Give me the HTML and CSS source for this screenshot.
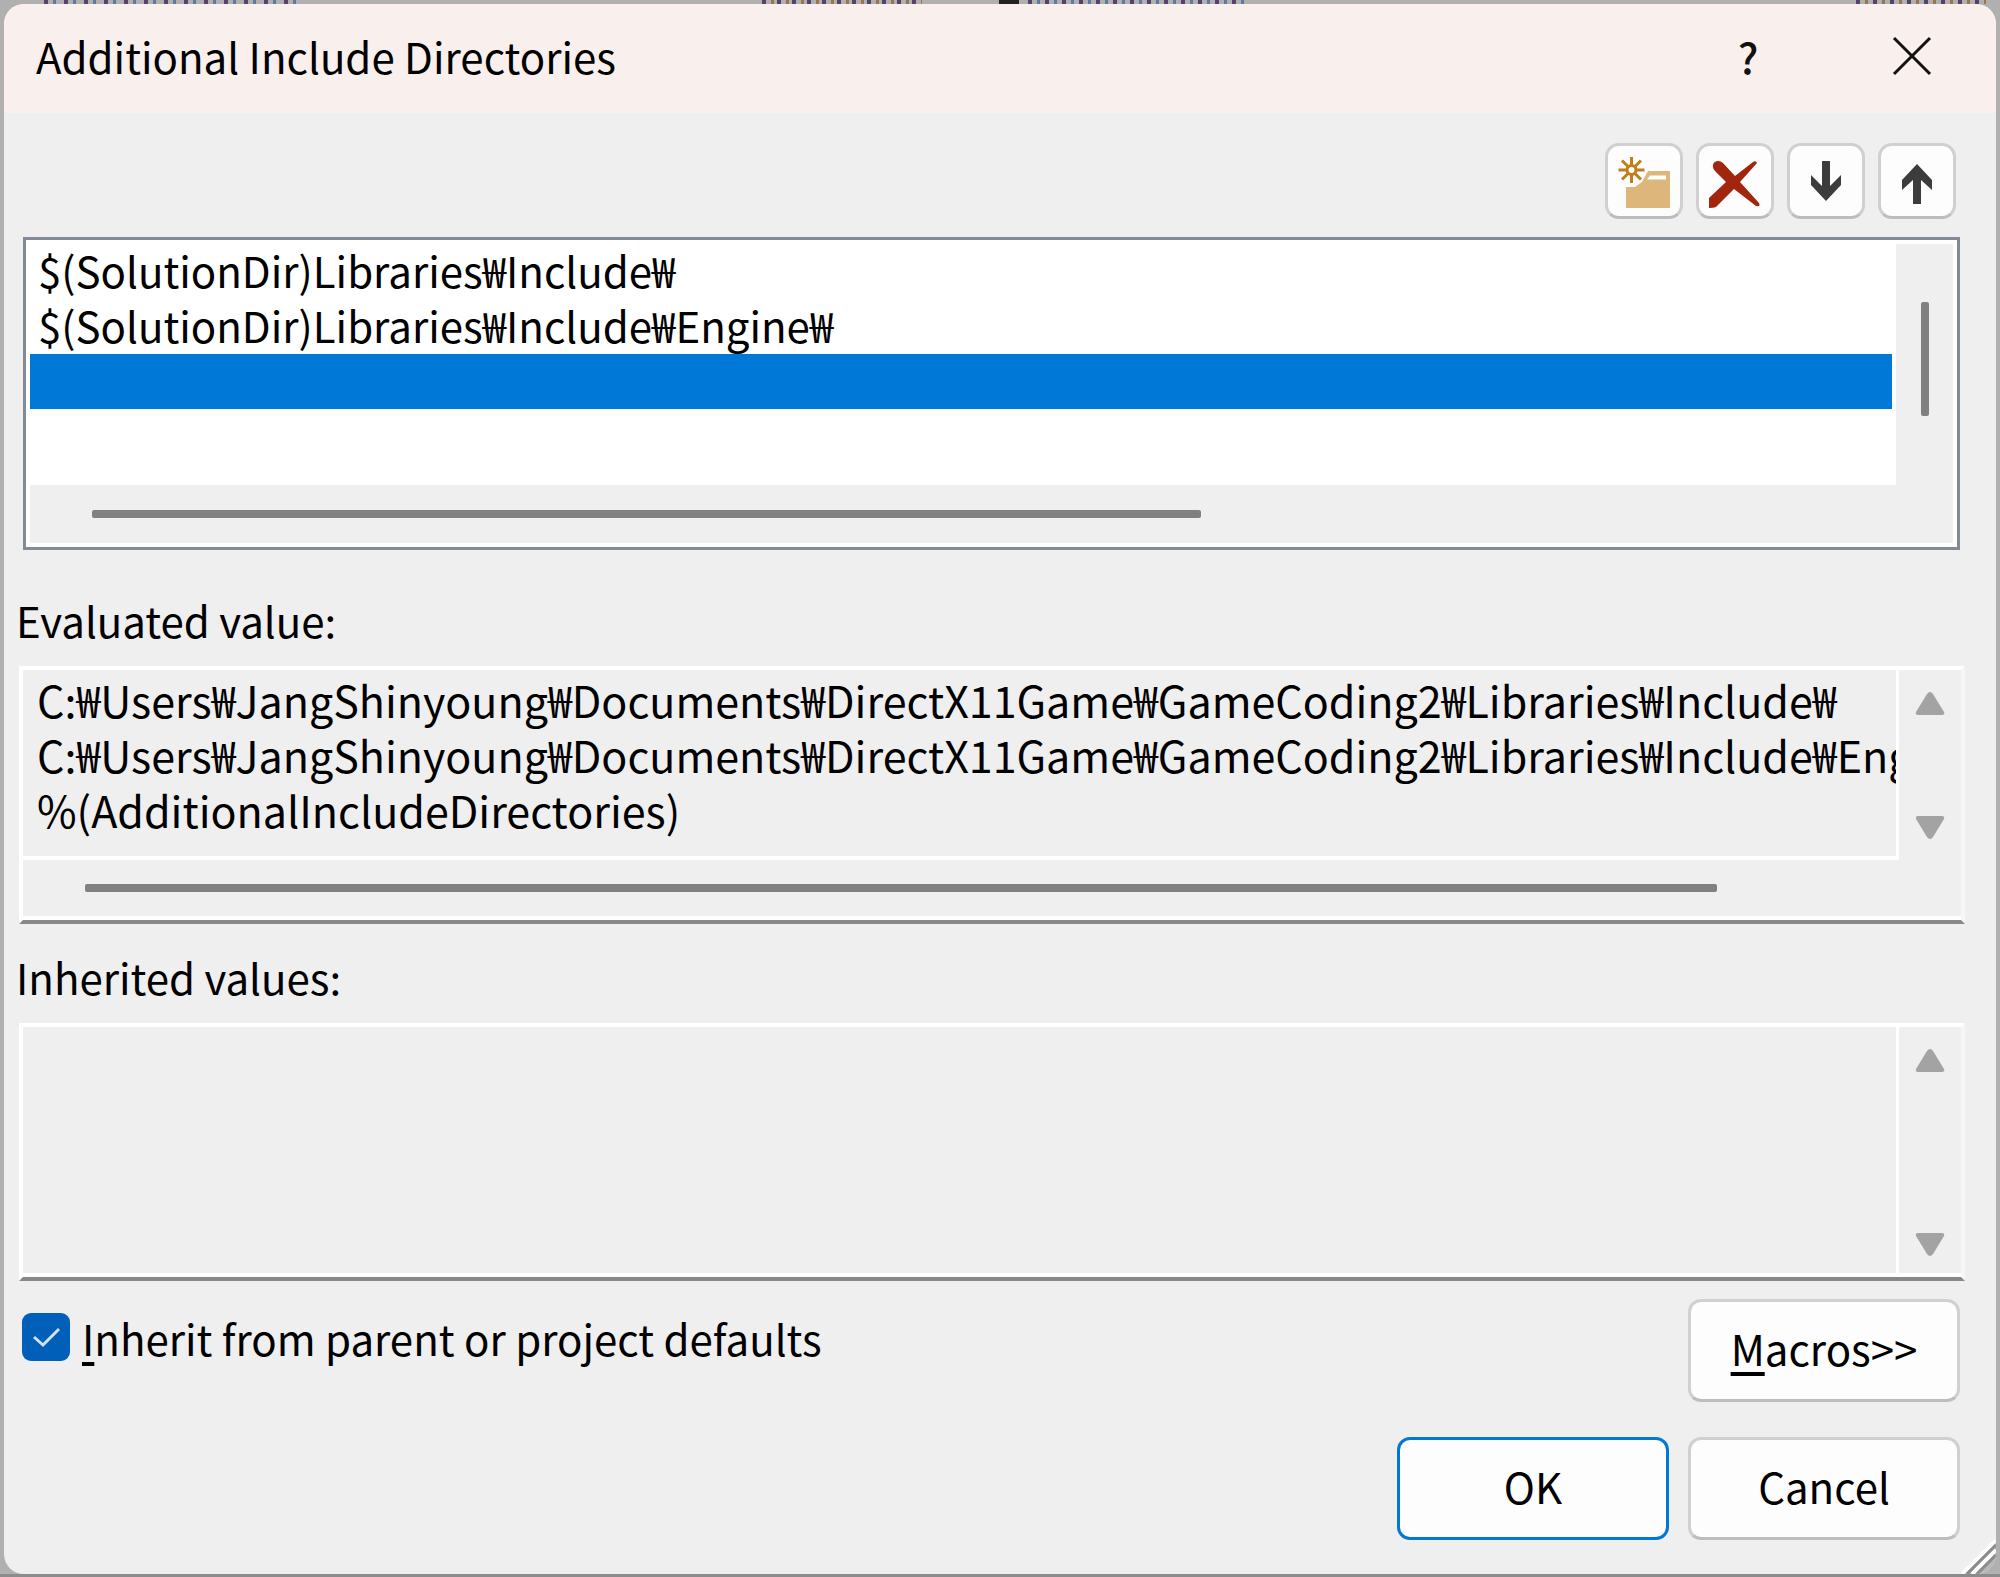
FILE: index.html
```html
<!DOCTYPE html>
<html lang="en">
	<head>
		<title>Additional Include Directories</title>
		<meta charset="utf-8" />
		<meta name="viewport" content="width=device-width, initial-scale=1" />
		<link rel="stylesheet" href="styles.css">
	</head>
	<body>
		<main class="dialog">
			<header class="titlebar">
				<h1>Additional Include Directories</h1>
				<button class="caption-btn help" type="button" aria-label="Help">?</button>
				<button class="caption-btn" type="button" aria-label="Close">
					<svg width="40" height="40" viewBox="0 0 40 40"><path d="M2 2L38 38M38 2L2 38" fill="none" stroke="#111" stroke-width="3"/></svg>
				</button>
			</header>

			<form class="content">
				<div class="toolbar">
					<button class="btn tool" type="button" aria-label="New line">
						<svg width="54" height="54" viewBox="0 0 54 54">
							<path d="M9 33H18L25 28L31 17H53V54H9Z" fill="#dcb67a"/>
							<path d="M33 21.500H49V25.500H30Z" fill="#fff"/>
							<g stroke="#c27d1a" stroke-width="3" fill="none">
								<circle cx="14.500" cy="16" r="4.500"/>
								<path d="M14.500 3V11M14.500 21V29M1.500 16H9.500M19.500 16H27.500M5 6.500L11 12.500M18 19.500L24 25.500M24 6.500L18 12.500M11 19.500L5 25.500"/>
							</g>
						</svg>
					</button>
					<button class="btn tool" type="button" aria-label="Delete">
						<svg width="54" height="54" viewBox="0 0 54 54"><path d="M5 13C4 7 11 5 15 9L27 22L45 8Q48 6 49 9L32 28L51 49Q53 53 48 52L26 35L8 53Q6 54 1 54V44L18 28L7 17Q5 15 5 13Z" fill="#a1260d"/></svg>
					</button>
					<button class="btn tool" type="button" aria-label="Move down">
						<svg width="54" height="54" viewBox="0 0 54 54"><path d="M23 7H31V32L42 21V31L27 47L12 31V21L23 32Z" fill="#3c3c3c"/></svg>
					</button>
					<button class="btn tool" type="button" aria-label="Move up">
						<svg width="54" height="54" viewBox="0 0 54 54"><path d="M23 50H31V26L42 36V26L27 10L12 26V36L23 26Z" fill="#3c3c3c"/></svg>
					</button>
				</div>

				<div class="paths">
					<ul class="rows">
						<li>$(SolutionDir)Libraries₩Include₩</li>
						<li>$(SolutionDir)Libraries₩Include₩Engine₩</li>
						<li class="selected"></li>
					</ul>
					<div class="vbar"><span class="thumb"></span></div>
					<div class="hbar"><span class="thumb"></span></div>
				</div>

				<h2>Evaluated value:</h2>
				<div class="box">
					<pre class="value">C:₩Users₩JangShinyoung₩Documents₩DirectX11Game₩GameCoding2₩Libraries₩Include₩
C:₩Users₩JangShinyoung₩Documents₩DirectX11Game₩GameCoding2₩Libraries₩Include₩Engine₩
%(AdditionalIncludeDirectories)</pre>
					<div class="arrows">
						<svg width="30" height="24" viewBox="0 0 30 24"><path d="M12 2Q15 -2 18 2L29 20Q30 23 27 23H3Q0 23 1 20Z" fill="#a3a3a3"/></svg>
						<svg width="30" height="24" viewBox="0 0 30 24"><path d="M12 22Q15 26 18 22L29 4Q30 1 27 1H3Q0 1 1 4Z" fill="#a3a3a3"/></svg>
					</div>
					<div class="hbar"><span class="thumb"></span></div>
				</div>

				<h2>Inherited values:</h2>
				<div class="box empty">
					<pre class="value"></pre>
					<div class="arrows">
						<svg width="30" height="24" viewBox="0 0 30 24"><path d="M12 2Q15 -2 18 2L29 20Q30 23 27 23H3Q0 23 1 20Z" fill="#a3a3a3"/></svg>
						<svg width="30" height="24" viewBox="0 0 30 24"><path d="M12 22Q15 26 18 22L29 4Q30 1 27 1H3Q0 1 1 4Z" fill="#a3a3a3"/></svg>
					</div>
				</div>

				<div class="options">
					<label class="inherit" for="inherit">
						<input type="checkbox" id="inherit" checked>
						<span><u>I</u>nherit from parent or project defaults</span>
					</label>
					<button class="btn" type="button"><u>M</u>acros&gt;&gt;</button>
				</div>
				<div class="actions">
					<button class="btn default" type="submit">OK</button>
					<button class="btn" type="button">Cancel</button>
				</div>
			</form>
			<svg class="grip" width="34" height="34" viewBox="0 0 34 34">
				<path d="M0 34L34 0V34Z" fill="#b8b8b8"/>
				<path d="M0 34L34 0M10 34L34 10" stroke="#fff" stroke-width="4"/>
				<path d="M5 34L34 5M15 34L34 15" stroke="#8c8c8c" stroke-width="3"/>
			</svg>
		</main>
	</body>
</html>
```
FILE: styles.css
```css
* {
	box-sizing: border-box;
}
/* the strips along the top are the window behind showing past the edge */
body {
	margin: 0;
	min-height: 100vh;
	padding: 4px 4px 3px;
	display: flex;
	background:
		repeating-linear-gradient(90deg, #57406a 0 4px, #b0b0b0 4px 9px, #5c7c9c 9px 12px, #b0b0b0 12px 20px) 44px 0 / 258px 4px no-repeat,
		repeating-linear-gradient(90deg, #57406a 0 4px, #b0b0b0 4px 9px, #9c7550 9px 12px, #b0b0b0 12px 15px) 762px 0 / 160px 4px no-repeat,
		linear-gradient(#222, #222) 999px 0 / 20px 4px no-repeat,
		repeating-linear-gradient(90deg, #57406a 0 4px, #b0b0b0 4px 9px, #5c7c9c 9px 12px, #b0b0b0 12px 17px) 1028px 0 / 218px 4px no-repeat,
		repeating-linear-gradient(90deg, #57406a 0 4px, #b0b0b0 4px 9px, #9c7550 9px 12px, #b0b0b0 12px 17px) 1856px 0 / 130px 4px no-repeat,
		linear-gradient(#8c8c8c, #8c8c8c) 0 100% / 100% 3px no-repeat,
		#b0b0b0;
	color: #000;
	font-family: "Noto Sans CJK KR", "Noto Sans", sans-serif;
	font-size: 42px;
	line-height: 55px;
}
h1, h2 {
	margin: 0;
	font-size: inherit;
	font-weight: normal;
}
svg {
	display: block;
}
u {
	text-decoration-thickness: 4px;
	text-underline-offset: 6px;
}

.dialog {
	position: relative;
	flex: 1;
	border-radius: 20px;
	background: #efefef;
	overflow: hidden;
}

.titlebar {
	display: flex;
	align-items: center;
	height: 109px;
	padding: 0 20px 6px 32px;
	background: #f9f0ed;
}
.titlebar h1 {
	flex: 1;
}
.caption-btn {
	display: flex;
	align-items: center;
	justify-content: center;
	width: 128px;
	height: 100px;
	margin-left: 36px;
	padding: 0;
	border: 0;
	background: none;
	color: #111;
	font: inherit;
}
.help {
	font-weight: 500;
}

.content {
	padding: 30px 31px 32px 15px;
}
.toolbar {
	display: flex;
	justify-content: flex-end;
	gap: 13px;
	padding-right: 9px;
}

.btn {
	display: flex;
	align-items: center;
	justify-content: center;
	width: 272px;
	height: 103px;
	padding: 0 0 6px;
	border: 3px solid #d0d0d0;
	border-bottom-color: #bdbdbd;
	border-radius: 13px;
	background: #fdfdfd;
	color: #000;
	font: inherit;
}
.btn.tool {
	width: 78px;
	height: 76px;
	padding: 0;
	border-radius: 14px;
}
.btn.default {
	border-color: #0078d4;
}

/* editable list with its scrollbars */
.paths {
	display: grid;
	grid-template-columns: 1fr 57px;
	grid-template-rows: 241px 58px;
	margin: 18px 5px 17px 4px;
	padding: 4px;
	border: 3px solid #838995;
	background: #fff;
}
.rows {
	margin: 0;
	padding: 0 4px 0 0;
	list-style: none;
	line-height: 51px;
	white-space: nowrap;
}
.rows li {
	height: 55px;
	padding-left: 8px;
}
.rows .selected {
	background: #0078d7;
}
.vbar {
	padding: 58px 25px 0;
	background: #efefef;
}
.vbar .thumb {
	display: block;
	width: 8px;
	height: 114px;
	border-radius: 2px;
	background: #808080;
}
.hbar {
	grid-column: 1 / 3;
	display: flex;
	align-items: center;
	padding: 0 12px 0 62px;
	background: #efefef;
}
.hbar .thumb {
	width: 60%;
	height: 8px;
	border-radius: 2px;
	background: #808080;
}

.content h2 {
	height: 99px;
	margin-left: -3px;
	padding-top: 25px;
}

/* read-only sunken boxes */
.box {
	display: grid;
	grid-template-columns: 1fr 62px;
	grid-template-rows: 1fr 60px;
	height: 258px;
	border: 4px solid #fff;
	border-right-color: #f6f6f6;
	border-bottom: 4px solid #888;
	box-shadow: inset 0 -4px #fff;
}
.value {
	margin: 0;
	padding: 2px 14px 0;
	border-right: 3px solid #fff;
	border-bottom: 4px solid #fff;
	font: inherit;
	font-size: 43px;
	overflow: hidden;
}
.arrows {
	display: flex;
	flex-direction: column;
	align-items: center;
	justify-content: space-between;
	padding: 22px 0 21px;
}
.box .hbar {
	padding: 0 0 4px 62px;
	background: none;
}
.box .hbar .thumb {
	width: 87%;
}
.box.empty {
	grid-template-rows: 1fr;
}
.empty .value {
	border-bottom: 0;
}

.options {
	display: flex;
	justify-content: space-between;
	padding: 18px 5px 0 3px;
}
.inherit {
	display: flex;
	align-items: center;
	gap: 12px;
	height: 76px;
}
.inherit input {
	appearance: none;
	width: 48px;
	height: 48px;
	margin: 0;
	border-radius: 9px;
	background: #005fb8 url("data:image/svg+xml,%3Csvg xmlns='http://www.w3.org/2000/svg' viewBox='0 0 48 48'%3E%3Cpath d='M12 24L21 32L37 16' fill='none' stroke='%23cfe3f5' stroke-width='3'/%3E%3C/svg%3E");
}
.actions {
	display: flex;
	justify-content: flex-end;
	gap: 19px;
	padding: 35px 5px 0 0;
}

.grip {
	position: absolute;
	right: 0;
	bottom: 0;
}
```
